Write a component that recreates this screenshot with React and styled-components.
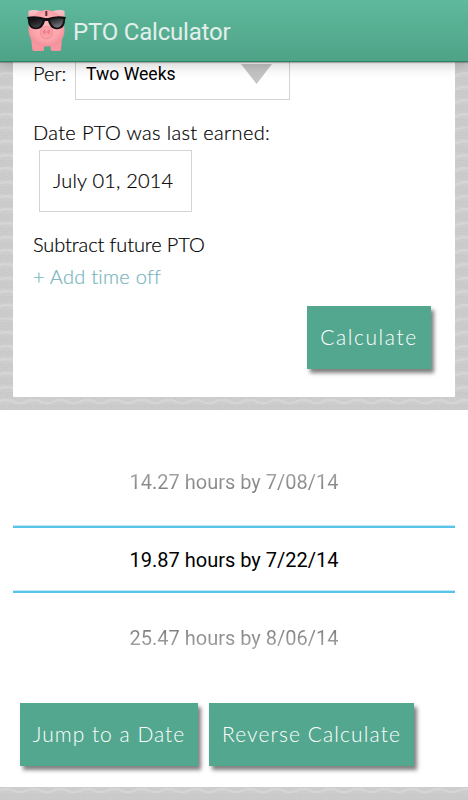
import React from 'react';
import styled, { createGlobalStyle } from 'styled-components';

const wave = `url("data:image/svg+xml,${encodeURIComponent(
  `<svg xmlns="http://www.w3.org/2000/svg" width="27" height="13.65" viewBox="0 0 27 13.65" preserveAspectRatio="none" fill="none"><rect width="27" height="14" fill="#cdcdcd"/><path d="M0 5.200L3 4.800L10 2.200H17L24 4.800L27 5.200" stroke="#d5d5d5" stroke-width="2.400"/><path d="M0 8.200L3.400 7L6.750 8.200L10.100 7L13.500 8.200L16.900 7L20.250 8.200L23.600 7L27 8.200M0 10.500L3.400 9.300L6.750 10.500L10.100 9.300L13.500 10.500L16.900 9.300L20.250 10.500L23.600 9.300L27 10.500M0 12.800L3.400 11.600L6.750 12.800L10.100 11.600L13.500 12.800L16.900 11.600L20.250 12.800L23.600 11.600L27 12.800" stroke="#c5c5c5" stroke-width=".8"/></svg>`
)}")`;

const Global = createGlobalStyle`
  * { box-sizing: border-box; }
  body { margin: 0; background: #fff; }
`;
const Screen = styled.div`
  width: 468px;
  height: 800px;
  overflow: hidden;
  display: flex;
  flex-direction: column;
  font-family: Lato, sans-serif;
  font-weight: 300;
  font-size: 20px;
  color: #000;
`;
const Header = styled.header`
  height: 62px;
  flex: none;
  display: flex;
  align-items: center;
  padding: 0 0 0 26px;
  gap: 6px;
  background: linear-gradient(#5fb99c, #4fa488 95%);
  border-bottom: 1px solid #2e7e65;
  box-shadow: 0 1px 1px rgba(0,0,0,.25), 0 3px 13px rgba(0,0,0,.2);
  z-index: 1;
`;
const Title = styled.h1`
  margin: 0;
  padding-top: 3px;
  font: 400 24px/30px Roboto, sans-serif;
  letter-spacing: -0.2px;
  color: #e3efeb;
`;
const Texture = styled.div`
  flex: none;
  height: ${p => p.$height}px;
  padding: 0 13px;
  background: #cdcdcd ${wave} -7px ${p => p.$offset}px / 27px 13.65px;
`;
const Form = styled.main`
  height: 335px;
  background: #fff;
  padding: 0 24px 0 20px;
  display: flex;
  flex-direction: column;
`;
const Text = styled.div`
  height: 24px;
  line-height: 22px;
  white-space: nowrap;
  letter-spacing: ${p => p.$spacing || 0}px;
  margin-top: ${p => p.$top || 0}px;
  color: ${p => p.$color || 'inherit'};
  -webkit-text-stroke: 0.2px currentColor;
`;
const PerRow = styled.div`
  display: flex;
  height: 38px;
`;
const Select = styled.div`
  width: 215px;
  height: 38px;
  margin-left: auto;
  margin-right: 141px;
  border: 1px solid #d4d4d4;
  border-top: 0;
  display: flex;
  justify-content: space-between;
  padding: 0 17px 0 10px;
  font: 400 17.6px/24px Roboto, sans-serif;
`;
const Arrow = styled.svg`
  width: 31px;
  height: 20px;
  margin-top: 2px;
`;
const DateField = styled.div`
  width: 153px;
  height: 62px;
  margin: 5px 0 0 6px;
  border: 1px solid #d4d4d4;
  padding: 18px 0 0 13px;
`;
const Button = styled.button`
  width: ${p => p.$width}px;
  height: 63px;
  flex: none;
  padding: 0 0 3px;
  border: 0;
  border-radius: 0;
  background: #54a78f;
  color: #fff;
  font: inherit;
  font-size: 21px;
  white-space: nowrap;
  letter-spacing: ${p => p.$spacing}px;
  box-shadow: 3px 4px 4px rgba(0,0,0,.5);
`;
const SubmitRow = styled.div`
  display: flex;
  justify-content: flex-end;
  margin-top: 17px;
`;
const Results = styled.section`
  height: 377px;
  flex: none;
  padding: 0 13px;
  background: #fff;
`;
const Picker = styled.div`
  height: 293px;
  padding-top: 37px;
`;
const Option = styled.div`
  height: 78px;
  padding: ${p => p.$shift === 'up' ? '0 0 9px' : '11px 0 0'};
  display: flex;
  align-items: center;
  justify-content: center;
  font: 400 20px/24px Roboto, sans-serif;
`;
const SelectedOption = styled(Option)`
  height: 68px;
  padding: 1px 0 0;
  background: linear-gradient(#bfe7f5 1px, #58c4e8 1px 3px, #fff 3px 65px, #bfe7f5 65px 66px, #58c4e8 66px);
`;
const Faded = styled.span`
  background: linear-gradient(${p => p.$from}, ${p => p.$to});
  background-clip: text;
  color: transparent;
`;
const Actions = styled.div`
  display: flex;
  gap: 11px;
  padding-left: 7px;
`;
const PigSvg = styled.svg`
  width: 41px;
  height: 43px;
  flex: none;
`;

function Pig() {
  return (
    <PigSvg viewBox="0 0 41 43">
      <defs>
        <radialGradient id="skin" cx=".5" cy=".45" r=".6">
          <stop offset="0" stopColor="#ffb9be" />
          <stop offset=".65" stopColor="#fca4ab" />
          <stop offset="1" stopColor="#ee8b95" />
        </radialGradient>
        <linearGradient id="ear" x2="0" y2="1">
          <stop stopColor="#fcc5c9" />
          <stop offset="1" stopColor="#f08d98" />
        </linearGradient>
        <linearGradient id="lens" x2="1" y2="1">
          <stop stopColor="#09090b" />
          <stop offset=".5" stopColor="#35353a" />
          <stop offset="1" stopColor="#88888e" />
        </linearGradient>
      </defs>
      <path d="M2.500 2Q7 0 14 2L27 2Q34 0 38.500 2Q39.500 8 37 14L4 14Q1.500 8 2.500 2Z" fill="url(#ear)" />
      <path d="M5 29H18V41.500Q11 42.500 6.500 41.500ZM23 29H36L35 41.500Q31 42.500 25 41.500Z" fill="#f9959f" />
      <path d="M20.500 1C31 1 38.500 10 38.500 21S31 37.500 20.500 37.500 2.500 31 2.500 21 10 1 20.500 1Z" fill="url(#skin)" />
      <rect x="19.300" y="2" width="2" height="5" rx=".5" fill="#5b3038" />
      <path d="M1 8Q10 6 19 9H22Q31 6 40 8L39 11C39 18 35 21 29 20Q24 19 22 12H19Q17 19 12 20C5 21 2 17 2 11Z" fill="#111114" />
      <path d="M3.500 10Q11 8 17 11Q15 18 11 18.500C6 19 4 16 3.500 10ZM24 11Q30 8 37.500 10C37 16 34 19 30 18.500Q26 18 24 11Z" fill="url(#lens)" />
      <ellipse cx="20.500" cy="23.500" rx="6.300" ry="6.300" fill="#f9a0a7" stroke="#ef8893" strokeWidth=".8" />
      <ellipse cx="18.300" cy="23" rx="1.200" ry="1.800" fill="#f78691" stroke="#e0707d" strokeWidth=".6" />
      <ellipse cx="22.700" cy="23" rx="1.200" ry="1.800" fill="#f78691" stroke="#e0707d" strokeWidth=".6" />
    </PigSvg>
  );
}

export default function App() {
  return (
    <Screen>
      <Global />
      <Header>
        <Pig />
        <Title>PTO Calculator</Title>
      </Header>
      <Texture $height={348} $offset={9}>
        <Form>
          <PerRow>
            <Text>Per:</Text>
            <Select>
              Two Weeks
              <Arrow viewBox="0 0 31 20"><path d="M0 0H31L15.500 20Z" fill="#c4c4c4" /></Arrow>
            </Select>
          </PerRow>
          <Text $top={21} $spacing={0.35}>Date PTO was last earned:</Text>
          <DateField><Text $spacing={0.2}>July 01, 2014</Text></DateField>
          <Text $top={21} $spacing={-0.1}>Subtract future PTO</Text>
          <Text $top={8} $spacing={0.25} $color="#78b4be">+ Add time off</Text>
          <SubmitRow><Button $width={124} $spacing={1.6}>Calculate</Button></SubmitRow>
        </Form>
      </Texture>
      <Results>
        <Picker>
          <Option $shift="up"><Faded $from="#aaa" $to="#777">14.27 hours by 7/08/14</Faded></Option>
          <SelectedOption>19.87 hours by 7/22/14</SelectedOption>
          <Option><Faded $from="#777" $to="#aaa">25.47 hours by 8/06/14</Faded></Option>
        </Picker>
        <Actions>
          <Button $width={178} $spacing={1}>Jump to a Date</Button>
          <Button $width={205} $spacing={1.1}>Reverse Calculate</Button>
        </Actions>
      </Results>
      <Texture $height={13} $offset={0} />
    </Screen>
  );
}
